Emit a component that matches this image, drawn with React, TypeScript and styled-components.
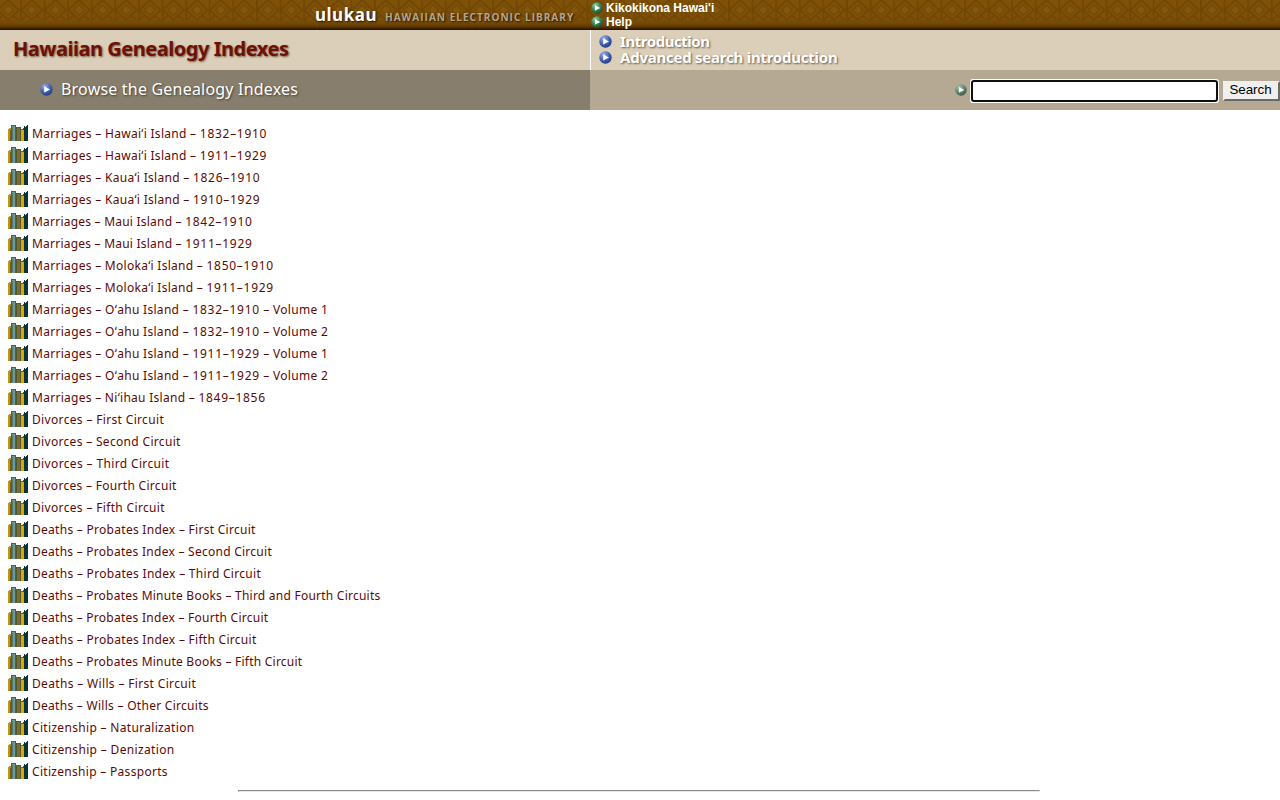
import React from "react";
import styled, { createGlobalStyle } from "styled-components";

const Global = createGlobalStyle`
  body { margin: 0; background: #fff; overflow: hidden; }
  * { box-sizing: border-box; }
`;
const humanist = `"Noto Sans", "Open Sans", sans-serif`;

const Page = styled.div`
  width: 1280px;
  height: 800px;
  overflow: hidden;
  font-family: ${humanist};
`;
const Banner = styled.header`
  position: relative;
  display: flex;
  height: 30px;
  background: #7a4d05;
`;
const Tapa = styled.svg`
  position: absolute;
  inset: 0;
`;
const Brand = styled.div`
  position: relative;
  width: 591px;
  padding-left: 315px;
  display: flex;
  align-items: baseline;
  white-space: nowrap;
  text-shadow: 1px 1px 2px #241300;
`;
const Logo = styled.span`
  font: 700 17px/30px ${humanist};
  letter-spacing: 0.5px;
  color: #fff;
  width: 70px;
`;
const Tagline = styled.span`
  font: 700 10px/28px "Open Sans", sans-serif;
  letter-spacing: 1.03px;
  color: #b5a68a;
`;
const BannerLinks = styled.nav`
  position: relative;
  display: flex;
  flex-direction: column;
  padding-top: 1px;
`;
const BannerLink = styled.a`
  display: flex;
  align-items: center;
  height: 14px;
  gap: 3px;
  font: 700 12px/14px "Liberation Sans", Arial, sans-serif;
  color: #fff;
`;
const TitleRow = styled.div`
  display: flex;
  height: 40px;
  background: #dccfba;
`;
const Title = styled.h1`
  margin: 0;
  width: 591px;
  padding-left: 13px;
  border-right: 1px solid #fff;
  font: 700 20px/38px ${humanist};
  letter-spacing: -0.47px;
  color: #6e1006;
  text-shadow: 1px 1px 2px rgba(60, 30, 10, 0.65);
  white-space: nowrap;
`;
const Intro = styled.nav`
  padding: 4px 0 0 8px;
`;
const IntroLink = styled.a<{ $tracking: number }>`
  display: flex;
  align-items: center;
  height: 15.5px;
  gap: 8px;
  font: 700 15px/15px ${humanist};
  letter-spacing: ${(p) => p.$tracking}px;
  color: #fff;
  text-shadow: 1px 1px 2px #645849;
  white-space: nowrap;
`;
const ToolRow = styled.div`
  display: flex;
  height: 40px;
`;
const Browse = styled.div`
  display: flex;
  align-items: center;
  width: 590px;
  padding: 0 0 2px 40px;
  gap: 8px;
  background: #877e6d;
  font-size: 16px;
  letter-spacing: 0.2px;
  color: #fff;
  text-shadow: 1px 1px 2px #453e32;
`;
const SearchBar = styled.form`
  display: flex;
  flex: 1;
  align-items: center;
  justify-content: flex-end;
  background: #b5a994;
`;
const Field = styled.input`
  width: 243px;
  height: 18px;
  margin: 1px 7px 0 6px;
  padding: 0 3px;
  border: 0;
  border-radius: 1px;
  background: #fff;
  outline: 2px solid #101010;
  box-shadow: 0 0 0 3px #fff;
`;
const SearchButton = styled.button`
  width: 57px;
  height: 20px;
  margin: 2px 0 0;
  padding: 0 2px 2px 0;
  border: 2px solid;
  border-color: #efefef #6b6b62 #6b6b62 #efefef;
  border-radius: 0;
  background: #efefef;
  font: 13.33px/14px "Liberation Sans", Arial, sans-serif;
  color: #000;
`;
const List = styled.ul`
  list-style: none;
  margin: 12px 0 0;
  padding: 0 0 0 8px;
`;
const Item = styled.li`
  display: flex;
  align-items: center;
  gap: 4px;
  height: 22px;
`;
const ItemLink = styled.a<{ $tracking: number }>`
  padding-top: 2px;
  font-size: 12px;
  line-height: 20px;
  letter-spacing: ${(p) => p.$tracking}px;
  color: #5c0a05;
  white-space: nowrap;
`;
const Years = styled.span`
  letter-spacing: 0.72px;
`;
const Rule = styled.hr`
  width: 802px;
  height: 2px;
  margin: 8px 0 0 238px;
  border: 1px solid;
  border-color: #8c8c8c #e8e8e8 #e8e8e8 #8c8c8c;
`;

const tones = {
  blue: ["#9db2e4", "#4463b4", "#243b80"],
  green: ["#94cda2", "#35824f", "#1a5230"],
  sage: ["#adc6ae", "#5f866c", "#3c5843"],
};
function Bullet({ tone, size = 13 }: { tone: keyof typeof tones; size?: number }) {
  const [hi, mid, low] = tones[tone];
  return (
    <svg width={size} height={size} viewBox="0 0 13 13">
      <defs>
        <radialGradient id={"ball-" + tone} cx="0.35" cy="0.25" r="0.8">
          <stop offset="0" stopColor={hi} />
          <stop offset="0.55" stopColor={mid} />
          <stop offset="1" stopColor={low} />
        </radialGradient>
      </defs>
      <circle cx="6.5" cy="6.5" r="6.2" fill={`url(#ball-${tone})`} />
      <path d="M4.2 3.3 L10 6.4 L4.2 9.4 Z" fill="#fff" />
    </svg>
  );
}

function Books() {
  return (
    <svg width="20" height="16" viewBox="0 0 20 16" shapeRendering="crispEdges">
      <path d="M0 4h1v-1h2v13H0z" fill="#c4930f" />
      <path d="M2 5h1v11H2z" fill="#70591a" />
      <path d="M3 0h5v16H3z" fill="#3c6463" />
      <path d="M4 1h3v15H4z" fill="#6f9994" />
      <path d="M4 2h1v13H4z" fill="#4d7776" />
      <path d="M8 2h5v14H8z" fill="#55562a" />
      <path d="M9 3h3v13H9z" fill="#726f38" />
      <path d="M13 5h3v11h-3z" fill="#dba70c" />
      <path d="M13 4h2v1h-2z" fill="#7c641c" />
      <path d="M16 1h1v1h1v-1h1v-1h1v16h-4z" fill="#0a3435" />
      <path d="M15 3h1v2h-1z" fill="#315452" />
    </svg>
  );
}

function TapaPattern() {
  return (
    <Tapa width="1280" height="30">
      <defs>
        <pattern id="tapa" width="23.6" height="30" patternUnits="userSpaceOnUse" x="-3.6">
          <rect width="24" height="30" fill="#825407" />
          <path d="M0.8 0V22M1 10L11.8 0L22.6 10L11.8 20L1 10M1 20L6 16M22.6 20L17 16" stroke="#744905" strokeWidth="1.8" fill="none" />
          <path d="M11.8 5L17 10L11.8 15L6.6 10Z" fill="#875a0d" stroke="#764c06" strokeWidth="1.4" />
          <path d="M0 21H24" stroke="#784c05" />
        </pattern>
        <linearGradient id="shade" x1="0" y1="0" x2="0" y2="1">
          <stop offset="0" stopColor="#3a2000" stopOpacity="0.05" />
          <stop offset="0.7" stopColor="#4a2800" stopOpacity="0.08" />
          <stop offset="0.87" stopColor="#3c2000" stopOpacity="0.45" />
          <stop offset="1" stopColor="#1c0e00" stopOpacity="1" />
        </linearGradient>
      </defs>
      <rect width="1280" height="30" fill="url(#tapa)" />
      <rect width="1280" height="30" fill="url(#shade)" />
    </Tapa>
  );
}

const entries: { label: string; tracking: number }[] = [
  { label: "Marriages – Hawaiʻi Island – 1832–1910", tracking: 0.29 },
  { label: "Marriages – Hawaiʻi Island – 1911–1929", tracking: 0.29 },
  { label: "Marriages – Kauaʻi Island – 1826–1910", tracking: 0.29 },
  { label: "Marriages – Kauaʻi Island – 1910–1929", tracking: 0.29 },
  { label: "Marriages – Maui Island – 1842–1910", tracking: 0.22 },
  { label: "Marriages – Maui Island – 1911–1929", tracking: 0.22 },
  { label: "Marriages – Molokaʻi Island – 1850–1910", tracking: 0.28 },
  { label: "Marriages – Molokaʻi Island – 1911–1929", tracking: 0.28 },
  { label: "Marriages – Oʻahu Island – 1832–1910 – Volume 1", tracking: 0.3 },
  { label: "Marriages – Oʻahu Island – 1832–1910 – Volume 2", tracking: 0.3 },
  { label: "Marriages – Oʻahu Island – 1911–1929 – Volume 1", tracking: 0.3 },
  { label: "Marriages – Oʻahu Island – 1911–1929 – Volume 2", tracking: 0.3 },
  { label: "Marriages – Niʻihau Island – 1849–1856", tracking: 0.28 },
  { label: "Divorces – First Circuit", tracking: 0.34 },
  { label: "Divorces – Second Circuit", tracking: 0.32 },
  { label: "Divorces – Third Circuit", tracking: 0.36 },
  { label: "Divorces – Fourth Circuit", tracking: 0.3 },
  { label: "Divorces – Fifth Circuit", tracking: 0.34 },
  { label: "Deaths – Probates Index – First Circuit", tracking: 0.28 },
  { label: "Deaths – Probates Index – Second Circuit", tracking: 0.26 },
  { label: "Deaths – Probates Index – Third Circuit", tracking: 0.29 },
  { label: "Deaths – Probates Minute Books – Third and Fourth Circuits", tracking: 0.24 },
  { label: "Deaths – Probates Index – Fourth Circuit", tracking: 0.26 },
  { label: "Deaths – Probates Index – Fifth Circuit", tracking: 0.28 },
  { label: "Deaths – Probates Minute Books – Fifth Circuit", tracking: 0.24 },
  { label: "Deaths – Wills – First Circuit", tracking: 0.34 },
  { label: "Deaths – Wills – Other Circuits", tracking: 0.28 },
  { label: "Citizenship – Naturalization", tracking: 0.32 },
  { label: "Citizenship – Denization", tracking: 0.34 },
  { label: "Citizenship – Passports", tracking: 0.3 },
];

export default function App() {
  return (
    <Page>
      <Global />
      <Banner>
        <TapaPattern />
        <Brand>
          <Logo>ulukau</Logo>
          <Tagline>HAWAIIAN ELECTRONIC LIBRARY</Tagline>
        </Brand>
        <BannerLinks>
          <BannerLink><Bullet tone="green" size={12} />Kikokikona Hawai'i</BannerLink>
          <BannerLink><Bullet tone="green" size={12} />Help</BannerLink>
        </BannerLinks>
      </Banner>
      <TitleRow>
        <Title>Hawaiian Genealogy Indexes</Title>
        <Intro>
          <IntroLink $tracking={-0.45}><Bullet tone="blue" />Introduction</IntroLink>
          <IntroLink $tracking={-0.24}><Bullet tone="blue" />Advanced search introduction</IntroLink>
        </Intro>
      </TitleRow>
      <ToolRow>
        <Browse><Bullet tone="blue" />Browse the Genealogy Indexes</Browse>
        <SearchBar onSubmit={(e) => e.preventDefault()}>
          <Bullet tone="sage" size={12} />
          <Field />
          <SearchButton>Search</SearchButton>
        </SearchBar>
      </ToolRow>
      <List>
        {entries.map(({ label, tracking }) => (
          <Item key={label}>
            <Books />
            <ItemLink $tracking={tracking}>
              {label.split(/(\d{4}–\d{4})/).map((part, i) =>
                i % 2 ? <Years key={i}>{part}</Years> : part
              )}
            </ItemLink>
          </Item>
        ))}
      </List>
      <Rule />
    </Page>
  );
}
